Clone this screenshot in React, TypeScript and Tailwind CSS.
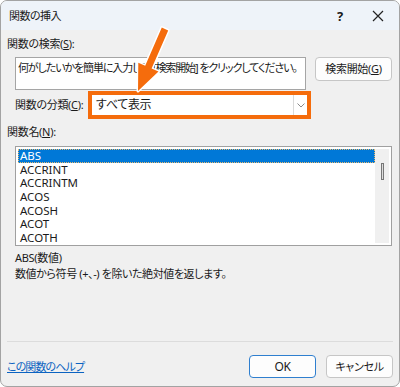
const items = ["ABS", "ACCRINT", "ACCRINTM", "ACOS", "ACOSH", "ACOT", "ACOTH"];

export default function App() {
  return (
    <div
      className="relative w-[400px] h-[387px] overflow-hidden rounded-[7px] border border-[#a3a3a3] bg-[#f0f0f0] flex flex-col text-[11px] leading-4 tracking-[-0.3px] text-[#1a1a1a] [font-feature-settings:'palt']"
      style={{ fontFamily: '"Noto Sans", "Noto Sans CJK JP", sans-serif' }}
    >
      {/* title bar */}
      <div className="h-[29px] shrink-0 bg-[#eef3f9] flex items-center pl-[8px]">
        <span className="tracking-[-0.5px]">関数の挿入</span>
        <span className="ml-auto w-[20px] text-center font-bold text-[13px]">?</span>
        <span className="ml-[20px] mr-[13px] w-[16px] flex justify-center">
          <svg width="12" height="12" viewBox="0 0 12 12" stroke="#222" strokeWidth="1.2">
            <path d="M1 1L11 11M11 1L1 11" />
          </svg>
        </span>
      </div>

      <div className="mt-[6px] pl-[6px] h-4">
        関数の検索(<span className="underline">S</span>):
      </div>

      <div className="mt-[5px] flex items-start pl-[14px]">
        <div className="w-[291px] h-[33px] bg-white border border-[#a5a5a5] px-[2px] pt-[2px] tracking-[-1.1px] whitespace-nowrap overflow-hidden">
          何がしたいかを簡単に入力して、[検索開始] をクリックしてください。
        </div>
        <div className="ml-[9px] w-[77px] h-[24px] rounded-[4px] border border-[#c6c6c6] bg-[#fdfdfd] flex items-center justify-center whitespace-nowrap">
          検索開始(<span className="underline">G</span>)
        </div>
      </div>

      <div className="mt-[1px] flex items-center pl-[14px] h-[28px]">
        <span className="w-[73px] whitespace-nowrap">
          関数の分類(<span className="underline">C</span>):
        </span>
        <div className="w-[223px] h-[28px] bg-[#f56c0c] p-[4px]">
          <div className="h-full bg-white flex items-center pl-[4px]">
            <span className="text-[12px]">すべて表示</span>
            <span className="ml-auto h-full w-[14px] border-l border-[#dadada] flex items-center justify-center">
              <svg width="8" height="5" viewBox="0 0 8 5" fill="none" stroke="#8a8a8a" strokeWidth="1">
                <path d="M0.5 0.5L4 4L7.5 0.5" />
              </svg>
            </span>
          </div>
        </div>
      </div>

      <div className="mt-[5px] pl-[6px] h-4">
        関数名(<span className="underline">N</span>):
      </div>

      <div className="mt-[6px] ml-[14px] w-[377px] h-[100px] border border-[#a0a0a0] bg-white flex p-[2px] text-[11.5px] tracking-normal">
        <div className="flex-1 flex flex-col">
          {items.map((it, i) => (
            <div
              key={it}
              className={
                i === 0
                  ? "h-[13.7px] leading-[13.7px] pl-[2px] bg-[#0078d7] text-white outline-1 outline-dotted outline-[#e9b96e] -outline-offset-1"
                  : "h-[13.7px] leading-[13.7px] pl-[2px]"
              }
            >
              {it}
            </div>
          ))}
        </div>
        <div className="w-[14px] bg-[#f0f0f0] flex justify-center pt-[14px]">
          <div className="w-[3px] h-[17px] border border-[#777] bg-[#ddd]" />
        </div>
      </div>

      <div className="mt-[4px] pl-[14px] h-4">ABS(数値)</div>
      <div className="pl-[14px] h-4 tracking-[-0.4px]">数値から符号 (+、-) を除いた絶対値を返します。</div>

      <div className="mt-[59px] mx-[6px] h-px bg-[#dcdcdc]" />

      <div className="mt-[13px] flex items-center pl-[6px] h-[23px]">
        <span className="text-[#0b63c1] underline tracking-[-0.9px]">この関数のヘルプ</span>
        <div className="ml-auto w-[67px] h-[23px] rounded-[4px] border border-[#2f7fcf] bg-[#fdfdfd] flex items-center justify-center text-[12px]">
          OK
        </div>
        <div className="ml-[10px] mr-[6px] w-[67px] h-[23px] rounded-[4px] border border-[#c6c6c6] bg-[#fdfdfd] flex items-center justify-center">
          キャンセル
        </div>
      </div>

      {/* annotation arrow */}
      <svg className="absolute left-0 top-0 pointer-events-none" width="400" height="387">
        <polygon
          points="160.8,26.6 167.2,29.4 150.6,67.6 157.5,70.6 137,90 137.3,61.8 144.2,64.8"
          fill="#f56c0c"
          stroke="#fff"
          strokeWidth="3"
          strokeLinejoin="round"
          paintOrder="stroke"
        />
      </svg>
    </div>
  );
}
